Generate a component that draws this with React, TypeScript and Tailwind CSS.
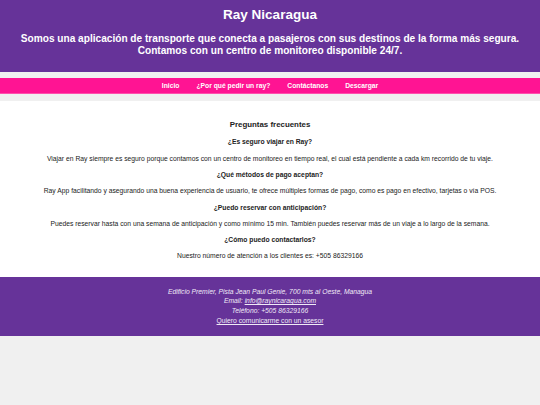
export default function App() {
  const faqs = [
    {
      q: "¿Es seguro viajar en Ray?",
      a: "Viajar en Ray siempre es seguro porque contamos con un centro de monitoreo en tiempo real, el cual está pendiente a cada km recorrido de tu viaje.",
    },
    {
      q: "¿Qué métodos de pago aceptan?",
      a: "Ray App facilitando y asegurando una buena experiencia de usuario, te ofrece múltiples formas de pago, como es pago en efectivo, tarjetas o vía POS.",
    },
    {
      q: "¿Puedo reservar con anticipación?",
      a: "Puedes reservar hasta con una semana de anticipación y como mínimo 15 min. También puedes reservar más de un viaje a lo largo de la semana.",
    },
    {
      q: "¿Cómo puedo contactarlos?",
      a: "Nuestro número de atención a los clientes es: +505 86329166",
    },
  ];
  return (
    <div className="min-h-[405px] bg-[#f0f0f0] font-['Liberation_Sans',Arial,sans-serif] text-[6.75px]">
      <header className="bg-[#663399] text-white text-center pt-[7px] pb-[15px]">
        <h1 className="text-[13.5px] font-bold leading-[15.5px]">Ray Nicaragua</h1>
        <h2 className="mt-[10px] text-[10.125px] font-bold leading-[12.4px]">
          Somos una aplicación de transporte que conecta a pasajeros con sus destinos de la forma más segura.
          <br />
          Contamos con un centro de monitoreo disponible 24/7.
        </h2>
      </header>
      <nav className="mt-[6px] h-[16px] bg-[#ff1493] border-b border-[#ff4fae] flex items-center justify-center gap-[17px] text-white font-bold">
        <a>Inicio</a>
        <a>¿Por qué pedir un ray?</a>
        <a>Contáctanos</a>
        <a>Descargar</a>
      </nav>
      <main className="mt-[7px] bg-white text-center text-[#222] pt-[18.5px] pb-[16.5px]">
        <h3 className="text-[7.9px] font-bold leading-[9px] mb-[9.5px]">Preguntas frecuentes</h3>
        <div className="flex flex-col gap-[8.5px]">
          {faqs.map((f) => (
            <div key={f.q} className="flex flex-col gap-[8.5px]">
              <h4 className="font-bold leading-[7.8px]">{f.q}</h4>
              <p className="leading-[7.8px]">{f.a}</p>
            </div>
          ))}
        </div>
      </main>
      <footer className="bg-[#663399] text-[#f0eaf6] text-center pt-[10px] pb-[10px] leading-[9.7px]">
        <p className="italic">Edificio Premier, Pista Jean Paul Genie, 700 mts al Oeste, Managua</p>
        <p className="italic">
          Email: <a className="underline">info@raynicaragua.com</a>
        </p>
        <p className="italic">Teléfono: +505 86329166</p>
        <p>
          <a className="underline">Quiero comunicarme con un asesor</a>
        </p>
      </footer>
    </div>
  );
}
